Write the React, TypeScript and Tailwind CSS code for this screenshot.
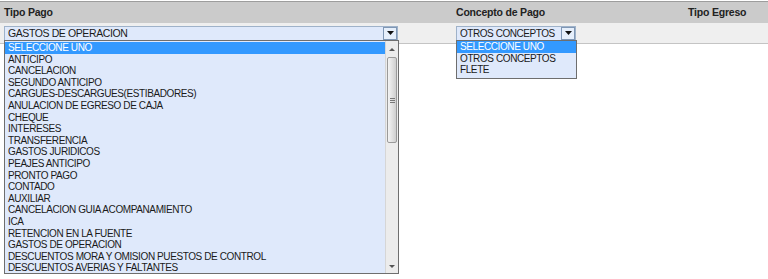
// ─── Payment type form row with open dropdowns ────────────────────────────

import React from "react";

const TIPOS_PAGO = [
  "SELECCIONE UNO",
  "ANTICIPO",
  "CANCELACION",
  "SEGUNDO ANTICIPO",
  "CARGUES-DESCARGUES(ESTIBADORES)",
  "ANULACION DE EGRESO DE CAJA",
  "CHEQUE",
  "INTERESES",
  "TRANSFERENCIA",
  "GASTOS JURIDICOS",
  "PEAJES ANTICIPO",
  "PRONTO PAGO",
  "CONTADO",
  "AUXILIAR",
  "CANCELACION GUIA ACOMPANAMIENTO",
  "ICA",
  "RETENCION EN LA FUENTE",
  "GASTOS DE OPERACION",
  "DESCUENTOS MORA Y OMISION PUESTOS DE CONTROL",
  "DESCUENTOS AVERIAS Y FALTANTES",
];

const CONCEPTOS = ["SELECCIONE UNO", "OTROS CONCEPTOS", "FLETE"];

// Small black down-arrow used on the select buttons
function ArrowDown() {
  return (
    <svg width="7" height="4" viewBox="0 0 7 4" className="block">
      <path d="M0 0H7L3.5 4Z" fill="#111" />
    </svg>
  );
}

function SelectBox({
  value,
  width,
  textClass,
}: {
  value: string;
  width: string;
  textClass: string;
}) {
  return (
    <div
      className={`flex h-[15px] items-stretch border border-[#9fb2c9] bg-[#dfe9fb] ${width}`}
    >
      <span className={`flex-1 truncate pl-[3px] leading-[13px] text-[#1a1a1a] ${textClass}`}>
        {value}
      </span>
      <span className="flex w-[14px] items-center justify-center border border-[#7f97b5] bg-[#e6effb]">
        <ArrowDown />
      </span>
    </div>
  );
}

function OptionList({ items, className }: { items: string[]; className: string }) {
  return (
    <ul className={className}>
      {items.map((item, i) => (
        <li
          key={item + i}
          className={
            i === 0
              ? "h-[11.6px] whitespace-nowrap bg-[#3399ff] pl-[3px] leading-[11.6px] text-white"
              : "h-[11.6px] whitespace-nowrap pl-[3px] leading-[11.6px] text-[#1a1a1a]"
          }
        >
          {item}
        </li>
      ))}
    </ul>
  );
}

export default function App() {
  return (
    <div className="relative h-[279px] w-[768px] overflow-hidden bg-white font-['Liberation_Sans',Arial,sans-serif] text-[10px] tracking-[-0.4px]">
      {/* ── Header row ── */}
      <div className="mt-[1px] flex h-[22px] items-center border-t border-[#9d9d9d] bg-[#cbcbcb] text-[10.5px] font-bold tracking-[-0.2px] text-[#222]">
        <div className="w-[456px] pl-[4px]">Tipo Pago</div>
        <div className="w-[232px]">Concepto de Pago</div>
        <div>Tipo Egreso</div>
      </div>

      {/* ── Input row ── */}
      <div className="flex h-[21px] items-center border-b border-[#c4c4c4] bg-[#efefef]">
        <div className="w-[456px] pl-[4px]">
          <SelectBox
            value="GASTOS DE OPERACION"
            width="w-[394px]"
            textClass="text-[10.5px] tracking-[-0.4px]"
          />
        </div>
        <div>
          <SelectBox
            value="OTROS CONCEPTOS"
            width="w-[120px]"
            textClass="text-[10px] tracking-[-0.45px]"
          />
        </div>
      </div>

      {/* ── Open list: Tipo Pago ── */}
      <div className="absolute left-[4px] top-[40px] flex h-[234px] w-[395px] border border-[#6e6e6e] bg-[#dfe9fb] pt-[1px]">
        <OptionList items={TIPOS_PAGO} className="flex-1 overflow-hidden" />
        {/* Scrollbar */}
        <div className="-mt-[1px] flex w-[13px] flex-col border-l border-[#d6d6d6] bg-[#ececec]">
          <div className="flex h-[16px] items-center justify-center">
            <svg width="6" height="3" viewBox="0 0 6 3">
              <path d="M0 3H6L3 0Z" fill="#555" />
            </svg>
          </div>
          <div className="mx-[1px] flex h-[86px] flex-col items-center justify-center gap-[1px] rounded-[2px] border border-[#9a9a9a] bg-gradient-to-r from-[#f4f4f4] via-[#e2e2e2] to-[#cfcfcf]">
            <span className="h-[1px] w-[5px] bg-[#777]" />
            <span className="h-[1px] w-[5px] bg-[#777]" />
            <span className="h-[1px] w-[5px] bg-[#777]" />
          </div>
          <div className="flex-1" />
          <div className="flex h-[14px] items-center justify-center">
            <svg width="6" height="3" viewBox="0 0 6 3">
              <path d="M0 0H6L3 3Z" fill="#555" />
            </svg>
          </div>
        </div>
      </div>

      {/* ── Open list: Concepto de Pago ── */}
      <div className="absolute left-[456px] top-[40px] w-[121px] border border-[#6e6e6e] bg-[#dfe9fb] pb-[2px]">
        <OptionList items={CONCEPTOS} className="" />
      </div>
    </div>
  );
}
